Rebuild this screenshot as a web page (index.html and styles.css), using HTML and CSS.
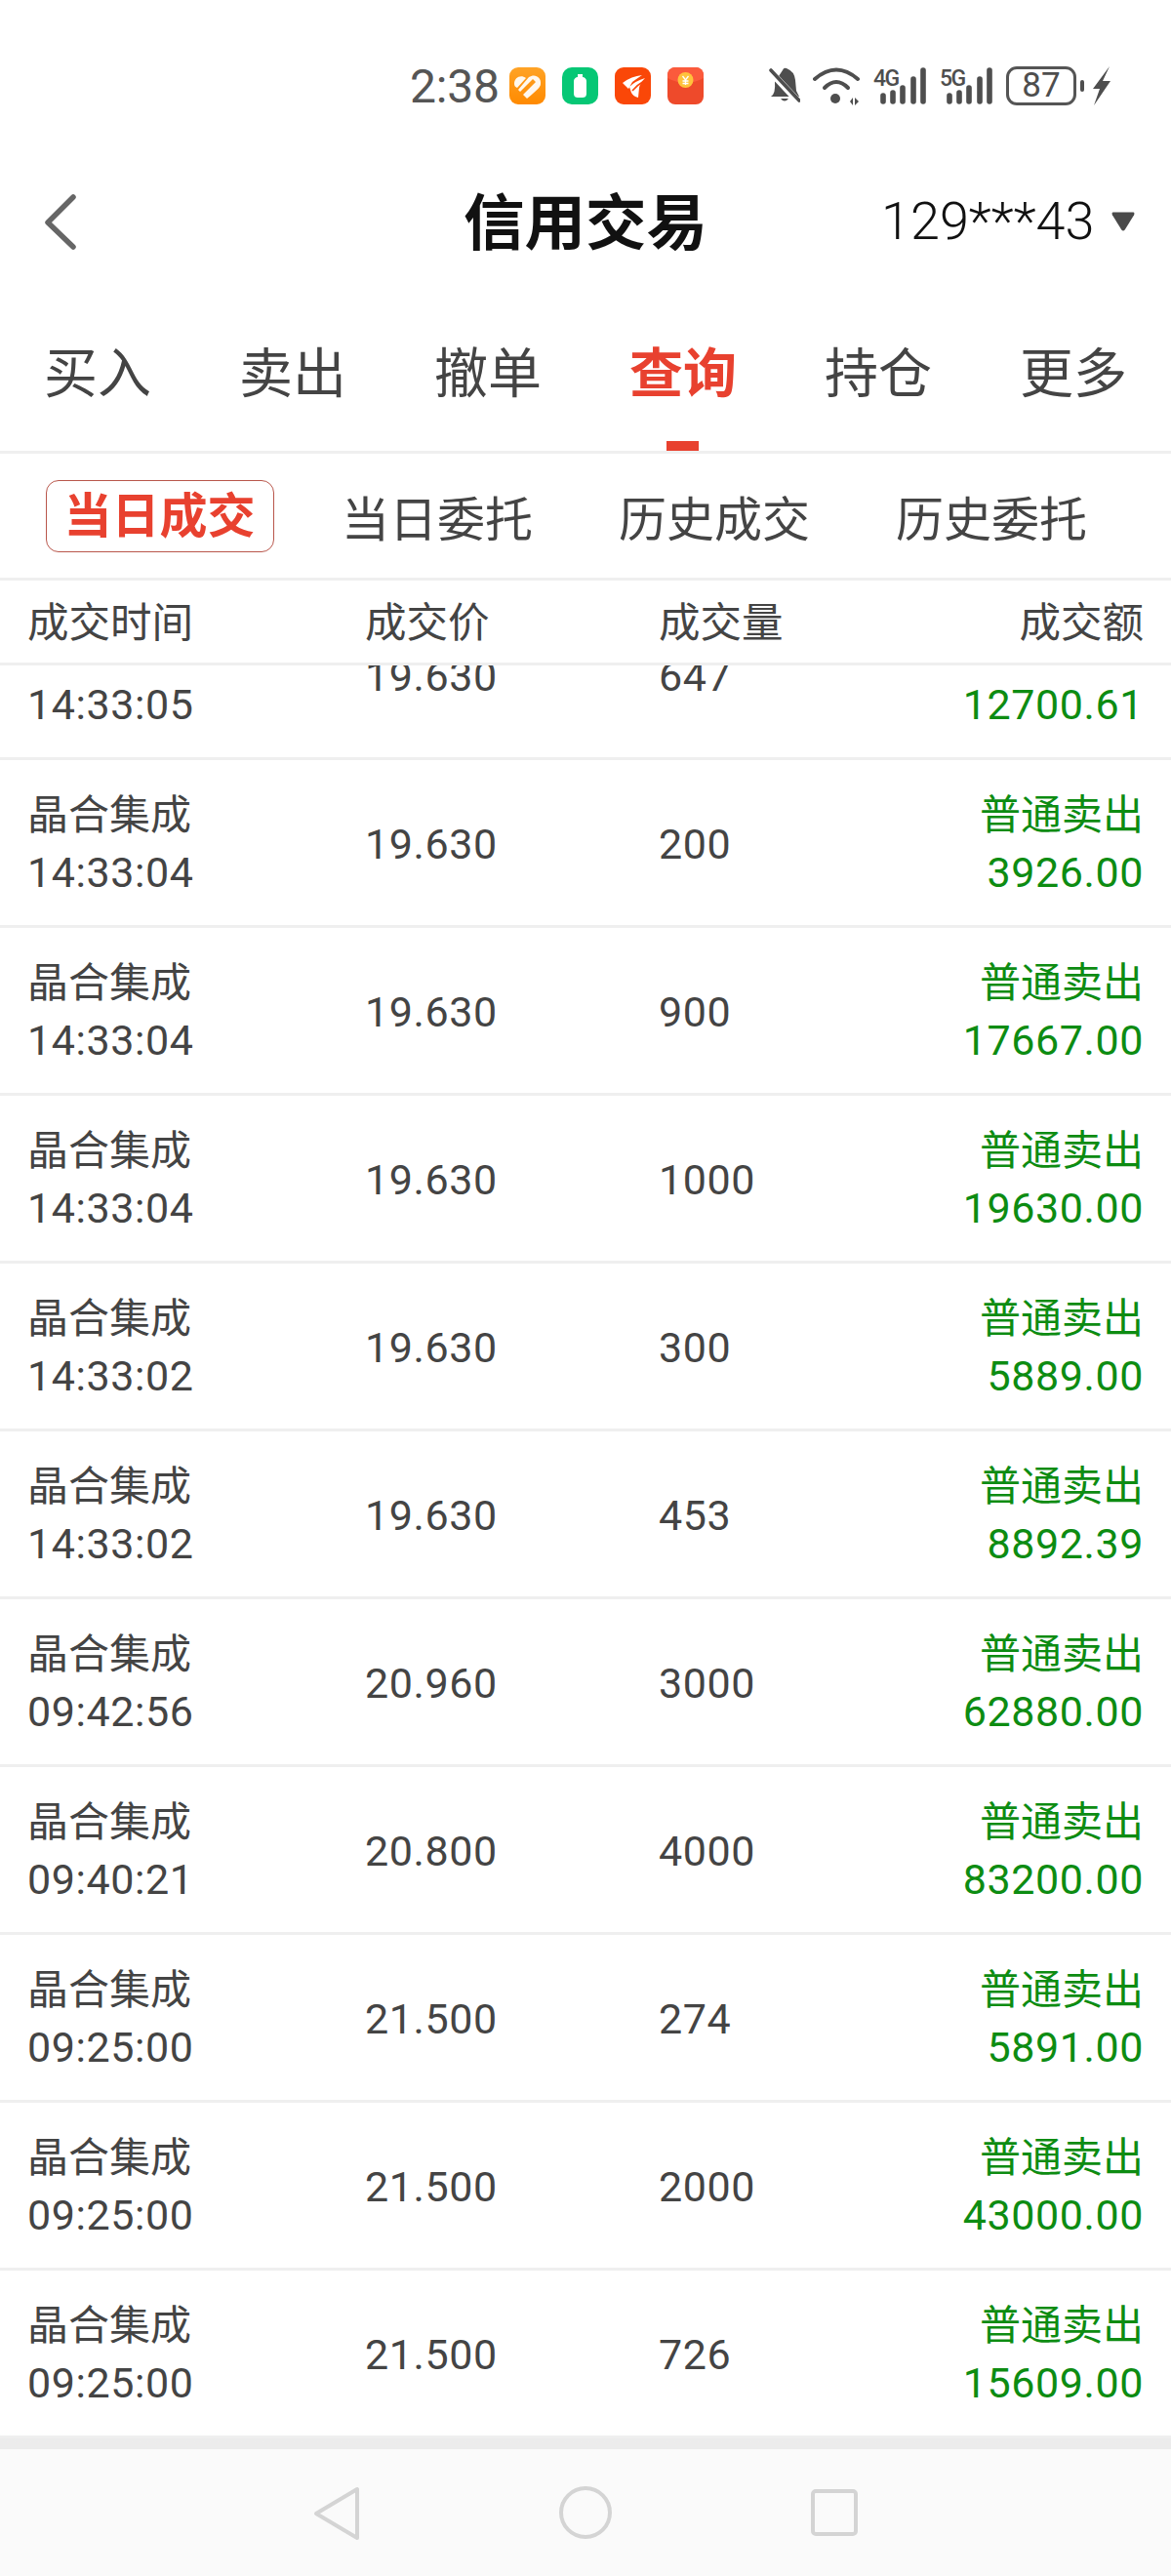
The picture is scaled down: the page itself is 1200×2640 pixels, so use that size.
FILE: index.html
```html
<!DOCTYPE html>
<html lang="zh-CN">
<head>
<meta charset="utf-8">
<title>信用交易</title>
<link rel="stylesheet" href="styles.css">
</head>
<body>
<div class="phone">
  <div class="status">
    <span class="clock">2:38</span>
    <div class="apps">
      <svg class="app" viewBox="0 0 37 38"><defs><linearGradient id="og" x1="0" y1="0" x2="0" y2="1"><stop offset="0" stop-color="#ffa326"/><stop offset="1" stop-color="#ff8a00"/></linearGradient></defs><rect width="37" height="38" rx="9" fill="url(#og)"/><path d="M5 17 C5 10 12 7 17 11 L8 21 C6 20 5 19 5 17Z M20 10 C26 6 33 10 32 17 C32 20 29 23 18 32 L14 28 L27 15 L24 12 L11 25 L9 23Z" fill="#fff" opacity=".93"/></svg>
      <svg class="app" viewBox="0 0 37 38"><rect width="37" height="38" rx="10" fill="#06c775"/><path d="M16 7h5v3c2 0 4 2 4 4v13c0 3-2 4-4 4h-5c-2 0-4-1-4-4V14c0-2 2-4 4-4z" fill="#fff"/></svg>
      <svg class="app" viewBox="0 0 37 38"><rect width="37" height="38" rx="9" fill="#fa4708"/><path d="M8 16 Q17 9 28 8 Q22 12 18 15 L14 22Z M15 20 Q21 14 31 11 Q26 16 25 21 L24 31 Q19 30 17 26Z" fill="#fff"/><path d="M18 24 Q23 18 30 14" stroke="#fa4708" stroke-width="1.500" fill="none"/></svg>
      <svg class="app" viewBox="0 0 37 38"><rect width="37" height="38" rx="8" fill="#ee4a2b"/><path d="M0 8 a8 8 0 0 1 8-8 h21 a8 8 0 0 1 8 8 v3 q-18 10-37 0z" fill="#fb5a3c"/><circle cx="18.500" cy="13" r="8" fill="#ffc23c"/><path d="M15.500 9l3 4 3-4M18.500 13v5M15.500 14h6M15.500 16.500h6" stroke="#fff" stroke-width="1.300" fill="none"/></svg>
    </div>
    <div class="sys">
      <svg class="bell" viewBox="0 0 32 38"><path d="M14 4 Q15 1 18 2 Q26 5 27 14 L28 25 L31 31 H2 Q7 28 6 16Z" fill="#4e4e4e"/><path d="M12 33h8q-4 5-8 0z" fill="#4e4e4e"/><path d="M1 5 L31 37" stroke="#fff" stroke-width="7"/><path d="M2 4 L31 35" stroke="#4e4e4e" stroke-width="3.600" stroke-linecap="round"/></svg>
      <svg class="wifi" viewBox="0 0 49 40"><g fill="none" stroke="#4e4e4e" stroke-width="4" stroke-linecap="round"><path d="M2 13 Q24 -6 46 13"/><path d="M12 22 Q24 10 36 22"/></g><circle cx="23" cy="33" r="5" fill="#4e4e4e"/><path d="M38 36l3-4v8zM43 32l4 4-4 4z" fill="#4e4e4e"/></svg>
      <svg class="sig" viewBox="0 0 55 40"><text class="net" x="0" y="20">4G</text><g stroke="#4e4e4e" stroke-linecap="round" stroke-width="5.600"><path d="M10 30v6M20 27v9M30 22v14M41 13v23M51 4v32"/></g></svg>
      <svg class="sig" viewBox="0 0 55 40"><text class="net" x="0" y="20">5G</text><g stroke="#4e4e4e" stroke-linecap="round" stroke-width="5.600"><path d="M10 30v6M20 27v9M30 22v14M41 13v23M51 4v32"/></g></svg>
      <div class="battery"><span class="batt-num">87</span></div>
      <span class="nub"></span>
      <svg class="bolt" viewBox="0 0 18 40"><path d="M17 0 L0 23 H7 L1 40 L18 15 H10Z" fill="#4e4e4e"/></svg>
    </div>
  </div>

  <div class="nav">
    <svg class="back" viewBox="0 0 34 58"><path d="M30 3 L4 29 L30 54" fill="none" stroke="#666" stroke-width="5.500" stroke-linecap="round" stroke-linejoin="round"/></svg>
    <h1 class="title">信用交易</h1>
    <div class="account"><span>129***43</span><svg class="caret" viewBox="0 0 28 24"><path d="M2 1 H26 Q28 1 27 4 L16 22 Q14 24 12 22 L1 4 Q0 1 2 1Z" fill="#4a4a4a"/></svg></div>
  </div>

  <div class="tabs">
    <div class="tab">买入</div>
    <div class="tab">卖出</div>
    <div class="tab">撤单</div>
    <div class="tab active">查询</div>
    <div class="tab">持仓</div>
    <div class="tab">更多</div>
  </div>

  <div class="subtabs">
    <div class="subtab current"><span>当日成交</span></div>
    <div class="subtab"><span>当日委托</span></div>
    <div class="subtab"><span>历史成交</span></div>
    <div class="subtab"><span>历史委托</span></div>
  </div>

  <div class="grid head">
    <div>成交时间</div><div>成交价</div><div>成交量</div><div class="end">成交额</div>
  </div>

  <div class="list">
    <div class="rows">
      <div class="grid row"><div>晶合集成<br>14:33:05</div><div>19.630</div><div>647</div><div class="end sell">普通卖出<br>12700.61</div></div>
      <div class="grid row"><div>晶合集成<br>14:33:04</div><div>19.630</div><div>200</div><div class="end sell">普通卖出<br>3926.00</div></div>
      <div class="grid row"><div>晶合集成<br>14:33:04</div><div>19.630</div><div>900</div><div class="end sell">普通卖出<br>17667.00</div></div>
      <div class="grid row"><div>晶合集成<br>14:33:04</div><div>19.630</div><div>1000</div><div class="end sell">普通卖出<br>19630.00</div></div>
      <div class="grid row"><div>晶合集成<br>14:33:02</div><div>19.630</div><div>300</div><div class="end sell">普通卖出<br>5889.00</div></div>
      <div class="grid row"><div>晶合集成<br>14:33:02</div><div>19.630</div><div>453</div><div class="end sell">普通卖出<br>8892.39</div></div>
      <div class="grid row"><div>晶合集成<br>09:42:56</div><div>20.960</div><div>3000</div><div class="end sell">普通卖出<br>62880.00</div></div>
      <div class="grid row"><div>晶合集成<br>09:40:21</div><div>20.800</div><div>4000</div><div class="end sell">普通卖出<br>83200.00</div></div>
      <div class="grid row"><div>晶合集成<br>09:25:00</div><div>21.500</div><div>274</div><div class="end sell">普通卖出<br>5891.00</div></div>
      <div class="grid row"><div>晶合集成<br>09:25:00</div><div>21.500</div><div>2000</div><div class="end sell">普通卖出<br>43000.00</div></div>
      <div class="grid row"><div>晶合集成<br>09:25:00</div><div>21.500</div><div>726</div><div class="end sell">普通卖出<br>15609.00</div></div>
    </div>
  </div>

  <div class="sysnav">
    <svg class="nav-back" viewBox="0 0 48 56"><path d="M45 3 V53 L3 28Z" fill="none" stroke="#d4d4d4" stroke-width="4" stroke-linejoin="round"/></svg>
    <svg class="nav-home" viewBox="0 0 54 54"><circle cx="27" cy="27" r="25" fill="none" stroke="#d4d4d4" stroke-width="4"/></svg>
    <svg class="nav-recent" viewBox="0 0 48 48"><rect x="2" y="2" width="44" height="44" rx="3" fill="none" stroke="#d4d4d4" stroke-width="4"/></svg>
  </div>
</div>
</body>
</html>
```

FILE: styles.css
```css
* { box-sizing: border-box; }
html, body { margin: 0; padding: 0; background: #fff; }
body { font-family: Roboto, "Noto Sans CJK SC", sans-serif; color: #444; }
.phone { width: 1200px; height: 2640px; display: flex; flex-direction: column; overflow: hidden; background: #fff; }

.status { height: 170px; flex: none; display: flex; align-items: flex-start; padding: 62px 0 0 420px; }
.clock { font-size: 48px; line-height: 54px; color: #555; letter-spacing: -.2px; width: 102px; }
.apps { display: flex; gap: 17px; margin-top: 7px; }
.app { width: 37px; height: 38px; display: block; }
.sys { display: flex; align-items: flex-start; margin: 6px 0 0 67px; }
.bell { width: 32px; height: 38px; margin-right: 13px; }
.wifi { width: 49px; height: 40px; margin-right: 13px; }
.sig { width: 55px; height: 40px; margin-right: 13px; overflow: visible; }
.net { font-family: Roboto, sans-serif; font-size: 23px; font-weight: 500; fill: #4e4e4e; letter-spacing: -1.500px; }
.battery { width: 72px; height: 40px; border: 3px solid #555; border-radius: 11px; display: flex; align-items: center; justify-content: center; }
.batt-num { font-size: 35px; line-height: 34px; color: #4e4e4e; }
.nub { width: 4px; height: 12px; background: #4e4e4e; border-radius: 2px; margin: 14px 9px 0 4px; }
.bolt { width: 18px; height: 40px; }

.nav { height: 115px; flex: none; position: relative; display: flex; align-items: center; justify-content: center; }
.back { position: absolute; left: 45px; top: 29px; width: 34px; height: 58px; }
.title { margin: -7px 0 0; font-size: 62.500px; line-height: 80px; font-weight: 700; color: #111; font-family: "Noto Sans CJK SC", sans-serif; }
.account { position: absolute; left: 903px; top: 24px; display: flex; align-items: center; font-size: 54px; line-height: 66px; font-weight: 300; color: #111; }
.caret { width: 24px; height: 22px; margin-left: 17px; }

.tabs { height: 180px; flex: none; display: grid; grid-template-columns: repeat(6, 200px); border-bottom: 3px solid #efefef; }
.tab { position: relative; padding-top: 61px; font-size: 55px; line-height: 64px; text-align: center; color: #444; font-family: "Noto Sans CJK SC", sans-serif; }
.tab.active { color: #e8412f; font-weight: 700; }
.tab.active::after { content: ""; position: absolute; left: 83px; bottom: 0; width: 33px; height: 10px; background: #e8412f; }

.subtabs { height: 130px; flex: none; display: grid; grid-template-columns: repeat(4, 284px); padding-left: 22px; align-items: center; border-bottom: 3px solid #efefef; }
.subtab { font-size: 49px; line-height: 62px; text-align: center; color: #444; font-family: "Noto Sans CJK SC", sans-serif; }
.subtab.current { margin-left: -1px; }
.subtab.current span { display: inline-block; width: 234px; height: 74px; line-height: 64px; border: 1.500px solid #b9574c; border-radius: 13px; color: #e8412f; font-weight: 700; vertical-align: top; }

.grid { display: grid; grid-template-columns: 346px 301px 1fr 320px; padding: 0 28px; align-items: center; font-size: 43px; letter-spacing: .6px; }
.end { text-align: right; }
.head { height: 87px; flex: none; font-size: 42.500px; line-height: 56px; border-bottom: 3px solid #efefef; letter-spacing: 0; padding-top: 4px; }

.list { flex: 1; min-height: 0; overflow: hidden; background: linear-gradient(#f3f3f3, #ececec); }
.rows { margin-top: -75px; background: #fff; }
.row { height: 172px; line-height: 58px; border-bottom: 3px solid #efefef; color: #444; padding-top: 2px; }
.row > div::first-line { font-size: 42px; letter-spacing: 0; }
.row > div:nth-child(2)::first-line, .row > div:nth-child(3)::first-line { font-size: 43px; letter-spacing: .6px; }
.sell { color: #0d8c12; }

.sysnav { height: 130px; flex: none; position: relative; background: #fafafa; }
.nav-back { position: absolute; left: 321px; top: 38px; width: 48px; height: 56px; }
.nav-home { position: absolute; left: 573px; top: 38px; width: 54px; height: 54px; }
.nav-recent { position: absolute; left: 831px; top: 41px; width: 48px; height: 48px; }
```
